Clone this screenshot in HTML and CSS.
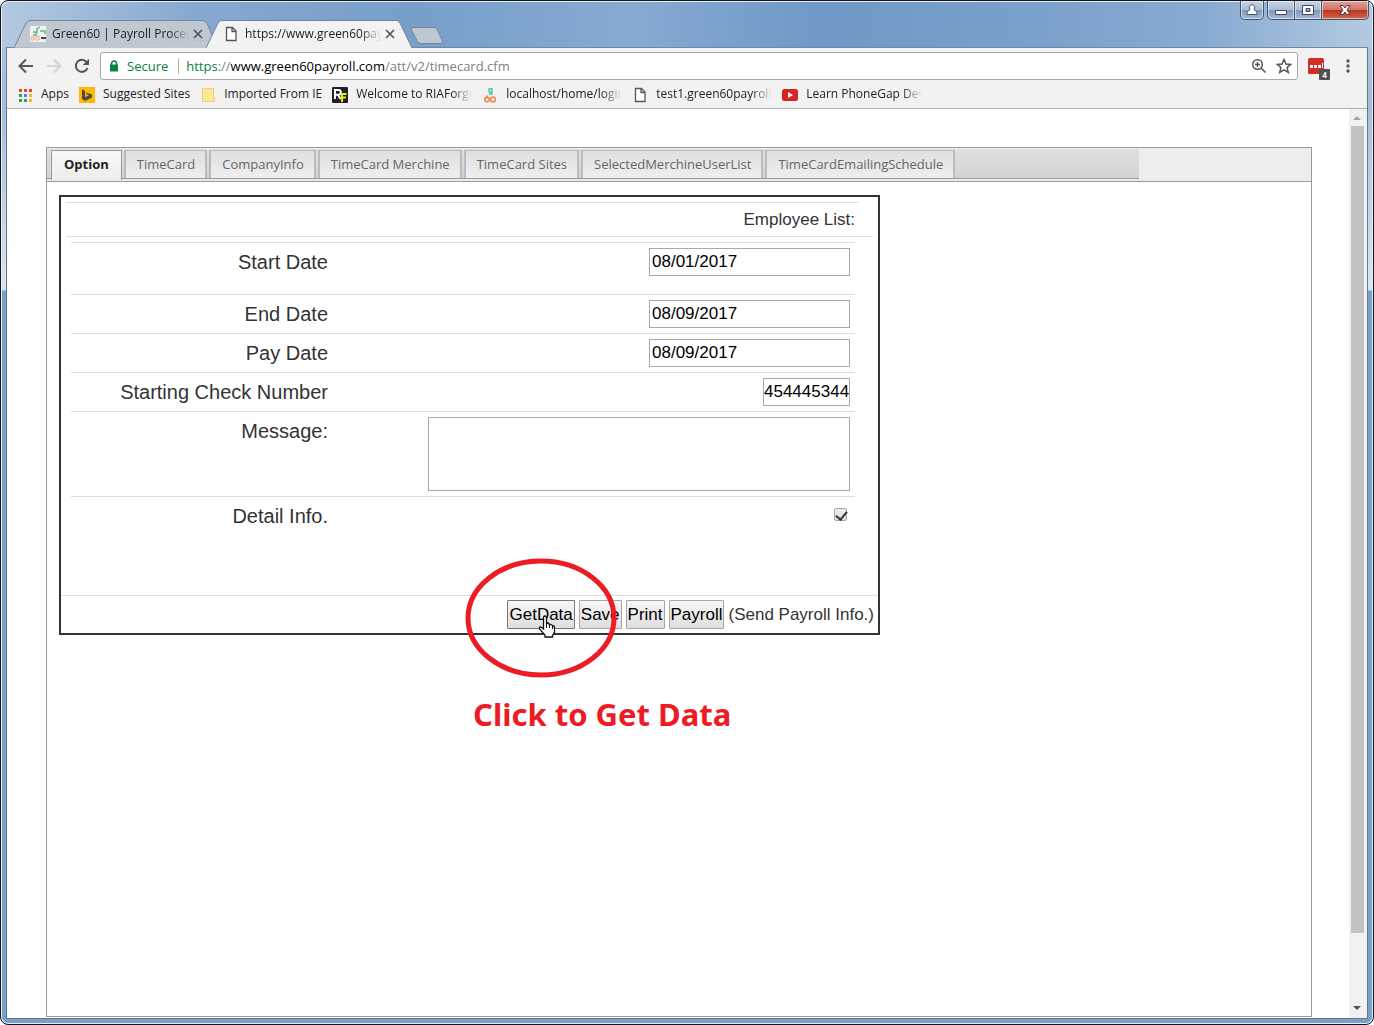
FILE: index.html
```html
<!DOCTYPE html>
<html lang="en">
<head>
<meta charset="utf-8">
<title>Timecard</title>
<link rel="stylesheet" href="styles.css">
</head>
<body>
<div class="window">
  <header class="titlebar">
    <div class="browser-tabs">
      <div class="browser-tab">
        <svg class="tab-shape" viewBox="0 0 200 28" preserveAspectRatio="none"><path d="M0 28 12 3Q14 .5 17 .5H188Q191 .5 193 3L200 20" fill="#bfc7d1" stroke="#71849b"/><path d="M200 20 196 28H0" fill="#bfc7d1"/></svg>
        <svg class="tab-icon" viewBox="0 0 16 16"><path fill="#eef3f1" d="M0 0h16v16H0z"/><path d="M3 6h3v3H3M7 7V3l3-2M10 5h5v3" fill="none" stroke="#69b48b" stroke-width="1.5"/><path d="M1 11h3v3H1zM6 10h3v4H6z" fill="none" stroke="#f2a77a"/><path d="M11 12h5" stroke="#444" stroke-width="2"/></svg>
        <span class="tab-title">Green60 | Payroll Process</span>
        <button class="tab-close" aria-label="Close tab"><svg viewBox="0 0 10 10"><path d="m1 1 8 8M9 1 1 9" stroke="#555" stroke-width="1.7"/></svg></button>
      </div>
      <div class="browser-tab current">
        <svg class="tab-shape" viewBox="0 0 206 28" preserveAspectRatio="none"><path d="M0 28 12 3Q13 .5 16 .5H190Q193 .5 194 3L206 28" fill="#f2f2f2" stroke="#71849b"/></svg>
        <svg class="tab-icon" viewBox="0 0 16 16"><path d="M3.500 1.500h6l3.500 3.500v9.500H3.500zM9 1.500V5.500h4" fill="#fff" stroke="#555" stroke-width="1.300"/></svg>
        <span class="tab-title">https://www.green60pay</span>
        <button class="tab-close" aria-label="Close tab"><svg viewBox="0 0 10 10"><path d="m1 1 8 8M9 1 1 9" stroke="#555" stroke-width="1.7"/></svg></button>
      </div>
      <button class="new-tab" aria-label="New tab"><svg viewBox="0 0 34 17"><path d="M3 .5H24Q26 .5 27 2L32.500 14Q33 16.500 31 16.500H11Q8.500 16.500 7.500 14.500L1.500 3Q.5.5 3 .5Z" fill="#bfc7d1" stroke="#71849b"/></svg></button>
    </div>
    <div class="window-buttons">
      <button class="win-btn user" aria-label="User"><svg viewBox="0 0 12 12"><path d="M6 .7a2.700 2.700 0 0 1 1.800 4.700L11 8v2.500H1V8l3.200-2.600A2.700 2.700 0 0 1 6 .7z" fill="#fff" stroke="#44556e"/></svg></button>
      <div class="win-group">
        <button class="win-btn" aria-label="Minimize"><svg viewBox="0 0 12 12"><path d="M.5 6.500h11v4H.5z" fill="#fff" stroke="#44485a"/></svg></button>
        <button class="win-btn max" aria-label="Maximize"><svg viewBox="0 0 12 12"><path fill-rule="evenodd" d="M.5 1.500h11v9H.5zM4 4.500h4v3H4z" fill="#fff" stroke="#44485a"/></svg></button>
        <button class="win-btn close" aria-label="Close"><svg viewBox="0 0 12 12"><path d="M1 1.500h3L6 4l2-2.500h3L8 6l3 4.500H8L6 8l-2 2.500H1L4 6z" fill="#fff" stroke="#5b3a45"/></svg></button>
      </div>
    </div>
  </header>

  <div class="client">
    <div class="toolbar">
      <button class="nav-btn" aria-label="Back"><svg viewBox="0 0 16 16"><path d="M15 8H2M8 1.500 1.500 8 8 14.500" fill="none" stroke="#555" stroke-width="2"/></svg></button>
      <button class="nav-btn" aria-label="Forward"><svg viewBox="0 0 16 16"><path d="M1 8h13M8 1.500 14.500 8 8 14.500" fill="none" stroke="#d2d2d2" stroke-width="2"/></svg></button>
      <button class="nav-btn" aria-label="Reload"><svg viewBox="0 0 16 16"><path d="M13.500 10A6 6 0 1 1 12.500 4" fill="none" stroke="#555" stroke-width="2"/><path d="M15 .8V7H8.800z" fill="#555"/></svg></button>
      <div class="address">
        <svg class="lock" viewBox="0 0 10 12"><path d="M2.500 5V3.500a2.500 2.500 0 0 1 5 0V5" fill="none" stroke="#0b8043" stroke-width="1.500"/><path d="M1 4.500h8v7H1z" fill="#0b8043"/></svg>
        <span class="secure">Secure</span>
        <a class="url" href="#"><span class="scheme">https</span>://<span class="host">www.green60payroll.com</span>/att/v2/timecard.cfm</a>
        <button class="field-btn" aria-label="Zoom"><svg viewBox="0 0 16 16"><circle cx="6.500" cy="6.500" r="4.800" fill="none" stroke="#555" stroke-width="1.500"/><path d="M10 10l4.500 4.500M4 6.500h5M6.500 4v5" stroke="#555" stroke-width="1.500"/></svg></button>
        <button class="field-btn" aria-label="Bookmark"><svg viewBox="0 0 16 16"><path d="m8 1.500 2 4.500 4.800.4-3.700 3.200 1.200 4.800L8 11.800l-4.300 2.600 1.200-4.800L1.200 6.400 6 6z" fill="none" stroke="#555" stroke-width="1.500"/></svg></button>
      </div>
      <button class="extension" aria-label="Extension"><svg viewBox="0 0 22 22"><rect width="16" height="16" rx="1.500" fill="#d32d27"/><path d="M2 7h3v3H2zM6 7h3v3H6zM10 7h3v3h-3zM14 5h1v5h-1z" fill="#fff"/></svg><span class="count">4</span></button>
      <button class="menu" aria-label="Menu"><svg viewBox="0 0 4 14"><circle cx="2" cy="2" r="1.700"/><circle cx="2" cy="7" r="1.700"/><circle cx="2" cy="12" r="1.700"/></svg></button>
    </div>

    <nav class="bookmarks">
      <a href="#"><svg viewBox="0 0 16 16"><path d="M2 2h3v3H2zM7 2h3v3H7zM12 2h3v3h-3z" fill="#ea4335"/><path d="M2 7h3v3H2zM2 12h3v3H2z" fill="#34a057"/><path d="M7 7h3v3H7z" fill="#4285f4"/><path d="M7 12h3v3H7z" fill="#34a057"/><path d="M12 7h3v3h-3zM12 12h3v3h-3z" fill="#f9b917"/></svg><span>Apps</span></a>
      <a href="#"><svg viewBox="0 0 16 16"><path fill="#ffb902" d="M0 0h16v16H0z"/><path d="M3 2.500 6 4v6l4-1.500-2-1L7 5.500 13 7.500v3L6 14l-3-2z" fill="#4d4a44"/></svg><span>Suggested Sites</span></a>
      <a href="#"><svg viewBox="0 0 16 16"><path d="M2.500 1.500h11v9h1v4h-12z" fill="#ffe793" stroke="#efcf6d"/></svg><span>Imported From IE</span></a>
      <a href="#"><svg viewBox="0 0 16 16"><rect width="16" height="16" rx="1" fill="#222"/><path d="M3 12V3h3.500a2.300 2.300 0 0 1 0 4.700H3M6 7.500l2.500 4.500" fill="none" stroke="#fff" stroke-width="2"/><path d="M10 15V7h4.500M10 10.500h4" fill="none" stroke="#e9e819" stroke-width="2"/></svg><span>Welcome to RIAForge</span></a>
      <a href="#"><svg viewBox="0 0 16 16"><path d="M10 2H7v3h3V1M10 4v3H7" fill="none" stroke="#49c58d" stroke-width="1.300"/><path d="M6 8.500 3 12" stroke="#ee8450" stroke-width="1.500"/><circle cx="5" cy="12.500" r="2.300" fill="none" stroke="#ee8450" stroke-width="1.500"/><ellipse cx="11" cy="12.500" rx="2.300" ry="2.500" fill="none" stroke="#ee8450" stroke-width="1.500"/></svg><span>localhost/home/login</span></a>
      <a href="#"><svg viewBox="0 0 16 16"><path d="M3.500 1.500h6l3.500 3.500v9.500H3.500zM9 1.500V5.500h4" fill="#fff" stroke="#555" stroke-width="1.300"/></svg><span>test1.green60payroll.c</span></a>
      <a href="#"><svg viewBox="0 0 16 16"><rect y="2" width="16" height="12" rx="2.500" fill="#d62424"/><path d="m6 5 5 3-5 3z" fill="#fff"/></svg><span>Learn PhoneGap Deve</span></a>
    </nav>

    <div class="viewport">
      <main class="page">
        <section class="panel">
          <div class="tab-header">
            <div class="tab-strip">
              <button class="tab selected">Option</button>
              <button class="tab">TimeCard</button>
              <button class="tab">CompanyInfo</button>
              <button class="tab">TimeCard Merchine</button>
              <button class="tab">TimeCard Sites</button>
              <button class="tab">SelectedMerchineUserList</button>
              <button class="tab">TimeCardEmailingSchedule</button>
            </div>
          </div>
          <form class="options">
            <div class="list-head"><div class="list-title">Employee List:</div></div>
            <div class="fields">
              <div class="row tall"><label for="start">Start Date</label><div class="control"><input class="text" id="start" type="text" value="08/01/2017"></div></div>
              <div class="row"><label for="end">End Date</label><div class="control"><input class="text" id="end" type="text" value="08/09/2017"></div></div>
              <div class="row"><label for="pay">Pay Date</label><div class="control"><input class="text" id="pay" type="text" value="08/09/2017"></div></div>
              <div class="row"><label for="check">Starting Check Number</label><div class="control"><input class="text short" id="check" type="text" value="454445344"></div></div>
              <div class="row"><label for="message">Message:</label><div class="control"><textarea id="message"></textarea></div></div>
              <div class="row last"><label for="detail">Detail Info.</label><div class="control"><input class="check" id="detail" type="checkbox" checked></div></div>
            </div>
            <div class="actions">
              <button type="button" class="focused">GetData</button>
              <button type="button">Save</button>
              <button type="button">Print</button>
              <button type="button">Payroll</button>
              <span>(Send Payroll Info.)</span>
            </div>
            <svg class="pointer" viewBox="0 0 18 24"><path d="M5.500 14V3Q5.500 1 7 1T8.500 3V9Q9 8 10 8T11.500 10Q12 9 13 9.500T14.500 11Q16.500 10 16.500 13V17L14.500 21V22H7V20L1.500 14Q1 11.500 3 12Z" fill="#fff" stroke="#111" stroke-width="1.300"/><path d="M8.500 9v4M11.500 10v3M14.500 11v3" stroke="#111"/></svg>
            <svg class="ring" viewBox="0 0 152 120"><ellipse cx="76" cy="60" rx="73" ry="57" fill="none" stroke="#ed1c24" stroke-width="5"/></svg>
            <p class="callout">Click to Get Data</p>
          </form>
        </section>
      </main>
      <div class="scrollbar">
        <svg viewBox="0 0 16 17"><path d="m4 11 4-4 4 4z" fill="#a3a3a3"/></svg>
        <div class="thumb"></div>
        <div class="rest"></div>
        <svg viewBox="0 0 16 17"><path d="m4 5 4 4 4-4z" fill="#505050"/></svg>
      </div>
    </div>
  </div>
</div>
</body>
</html>
```
FILE: styles.css
```css
* { box-sizing: border-box; }
body { margin: 0; background: #fff; }
button { margin: 0; padding: 0; border: 0; background: none; font: inherit; color: inherit; }
svg { display: block; flex: none; }
a { color: inherit; text-decoration: none; }

.window {
  display: flex;
  flex-direction: column;
  min-height: 100vh;
  padding: 0 4px 4px;
  border: 1px solid #14151f;
  border-radius: 8px;
  box-shadow: inset 0 0 0 1px #e6f0fa;
  background:
    linear-gradient(90deg, #b4c9e0, #86a9d0 14%, #779fc9 30%, #86abd3 46%, #6f98c6 60%, #7aa1cb 75%, #88abd2 88%, #b4cae1) 0 0 / 100% 48px no-repeat,
    linear-gradient(#b4c9e0, #a3bcd8 100px, #dde5ee 289px, #7ba0c8 290px);
  background-clip: padding-box;
  font: 12px/16px "Open Sans", sans-serif;
  color: #222;
}

.titlebar { display: flex; justify-content: space-between; align-items: flex-start; height: 46px; }
.browser-tabs { display: flex; align-items: flex-end; height: 47px; padding-left: 9px; }
.browser-tab {
  position: relative;
  display: flex;
  align-items: center;
  width: 200px;
  height: 28px;
  padding: 0 11px 0 16px;
}
.browser-tab.current { z-index: 1; width: 206px; margin-left: -8px; padding-left: 17px; padding-right: 17px; }
.tab-shape { position: absolute; inset: 0; width: 100%; height: 28px; }
.tab-icon { position: relative; width: 16px; height: 16px; margin-right: 6px; }
.tab-title { position: relative; flex: 1; overflow: hidden; white-space: nowrap; }
.tab-title, .bookmarks span { mask-image: linear-gradient(90deg, #000 calc(100% - 20px), transparent); }
.tab-close { position: relative; width: 10px; height: 10px; margin-left: 4px; }
.new-tab { width: 34px; height: 17px; margin: 0 0 4px -2px; }

.window-buttons { display: flex; gap: 3px; }
.win-group { display: flex; }
.win-btn {
  display: flex;
  align-items: center;
  justify-content: center;
  width: 28px;
  height: 19px;
  border: 1px solid #43546e;
  border-top: 0;
  background: linear-gradient(#c6d4e6, #a9bdd7 50%, #8099b9 50%, #a3bad5);
  box-shadow: inset 0 0 0 1px #ffffff88;
}
.win-btn svg { width: 12px; height: 12px; }
.win-btn.user { width: 24px; border-radius: 0 0 5px 5px; }
.win-btn.max { width: 27px; }
.win-group .win-btn:first-child { border-radius: 0 0 0 5px; }
.win-group .win-btn + .win-btn { border-left: 0; }
.win-btn.close { width: 47px; border-radius: 0 0 5px; background: linear-gradient(#dfa093, #cf7365 50%, #b9321d 50%, #cf6a50); }

.client { flex: 1; display: flex; flex-direction: column; margin: 0 1px 1px; border: 1px solid #5d7897; border-top-color: #7088a4; background: #f2f2f2; }

.toolbar { display: flex; align-items: center; height: 36px; padding: 0 17px 0 11px; }
.nav-btn { width: 16px; height: 16px; margin-right: 12px; }
.nav-btn:nth-child(3) { margin-right: 10px; }
.address {
  flex: 1;
  display: flex;
  align-items: center;
  height: 28px;
  padding: 0 5px 0 8px;
  border: 1px solid #a8a8a8;
  border-radius: 3px;
  background: #fff;
  font-size: 13px;
}
.lock { width: 10px; height: 12px; }
.secure { margin-left: 8px; padding-right: 10px; border-right: 1px solid #b0b0b0; color: #0b8043; }
.url { flex: 1; margin-left: 7px; color: #808080; }
.scheme { color: #0b8043; }
.host { color: #000; }
.field-btn { width: 16px; height: 16px; margin-left: 9px; }
.extension { position: relative; width: 22px; height: 22px; margin: 5px 0 0 10px; }
.extension svg { width: 22px; height: 22px; }
.count { position: absolute; right: 0; bottom: 0; width: 11px; border-radius: 1px; background: #505050; color: #fff; font: bold 8px/11px "Open Sans", sans-serif; }
.menu { width: 4px; height: 14px; margin-left: 16px; fill: #555; }

.bookmarks { display: flex; gap: 10px; height: 25px; padding: 2px 10px 0; border-bottom: 1px solid #b0b0b0; }
.bookmarks a { display: flex; gap: 8px; white-space: nowrap; }
.bookmarks svg { width: 16px; height: 16px; margin-top: 1px; }
.bookmarks span { width: 116px; overflow: hidden; }
.bookmarks a:nth-child(-n+3) span { width: auto; mask-image: none; }

.viewport { flex: 1; display: flex; background: #fff; }
.page { flex: 1; display: flex; padding: 38px 37px 1px 39px; }
.panel { flex: 1; border: 1px solid #999; }
.scrollbar { display: flex; flex-direction: column; width: 18px; padding-right: 2px; background: #f1f1f1; }
.scrollbar svg { width: 16px; height: 17px; }
.thumb { flex: 807; margin: 0 1px 0 2px; background: #c1c1c1; }
.rest { flex: 68; }

.tab-header { padding: 1px 0 2px; border-bottom: 1px solid #999; background: #ededed; }
.tab-strip {
  display: flex;
  gap: 2px;
  width: 1092px;
  max-width: 100%;
  height: 30px;
  padding: 1px 4px 0;
  border-bottom: 1px solid #999;
  background: linear-gradient(#e0e0e0, #d3d3d3);
}
.tab {
  height: 28px;
  padding: 0 10px 2px 11px;
  border: 1px solid #bbb;
  border-width: 1px 2px 0;
  background: linear-gradient(#dfdfdf, #efefef);
  color: #666;
  font: 13px/24px "Open Sans", sans-serif;
  white-space: nowrap;
}
.tab.selected { height: 30px; padding: 0 12px 4px; border: 1px solid #999; border-bottom: 0; background: linear-gradient(#f8f8f8, #ededed); color: #222; font-weight: bold; }

.options {
  position: relative;
  width: 821px;
  max-width: 100%;
  margin: 13px 0 0 12px;
  border: 2px solid #333;
  color: #333;
  font: 17px/20px "Liberation Sans", Arial, sans-serif;
}
.list-head { margin: 5px 5px 0; border-bottom: 1px solid #ddd; }
.list-title { margin-right: 14px; padding: 7px 4px 6px; border-top: 1px solid #ddd; text-align: right; }
.fields { margin: 5px 23px 0 10px; }
.row { display: flex; padding: 5px; border-top: 1px solid #ddd; }
.row.tall { padding-bottom: 18px; }
.row.last { padding-bottom: 65px; }
.row label { width: 252px; font-size: 20px; line-height: 28px; text-align: right; }
.control { flex: 1; display: flex; justify-content: flex-end; align-items: flex-start; }
.text, textarea { border: 1px solid #a9a9a9; background: #fff; color: #000; font: inherit; }
.text { width: 201px; height: 28px; padding: 0 2px; }
.text.short { width: 87px; padding: 0; }
textarea { width: 422px; height: 74px; resize: none; }
.check {
  appearance: none;
  width: 13px;
  height: 13px;
  margin: 6px 3px 0;
  border: 1px solid #aaa;
  border-radius: 2px;
  background: linear-gradient(#eee, #ddd);
}
.check:checked::after { content: ""; display: block; width: 5px; height: 9px; margin: 0 0 0 3px; border: solid #333; border-width: 0 2px 2px 0; transform: rotate(40deg); }
.actions { display: flex; justify-content: flex-end; gap: 4px; padding: 4px; border-top: 1px solid #ddd; line-height: 29px; }
.actions button { height: 29px; padding: 0 1px; border: 1px solid #a6a6a6; border-radius: 1px; background: linear-gradient(#f6f6f6, #dedede); color: #000; line-height: 26px; }
.actions .focused { border-color: #777; }
.pointer { position: absolute; left: 477px; top: 418px; width: 18px; height: 24px; }
.ring { position: absolute; left: 404px; top: 361px; width: 152px; height: 120px; }
.callout { position: absolute; left: 412px; top: 497px; margin: 0; color: #ed1c24; font: bold 31px/40px "Noto Sans", sans-serif; white-space: nowrap; }
```
